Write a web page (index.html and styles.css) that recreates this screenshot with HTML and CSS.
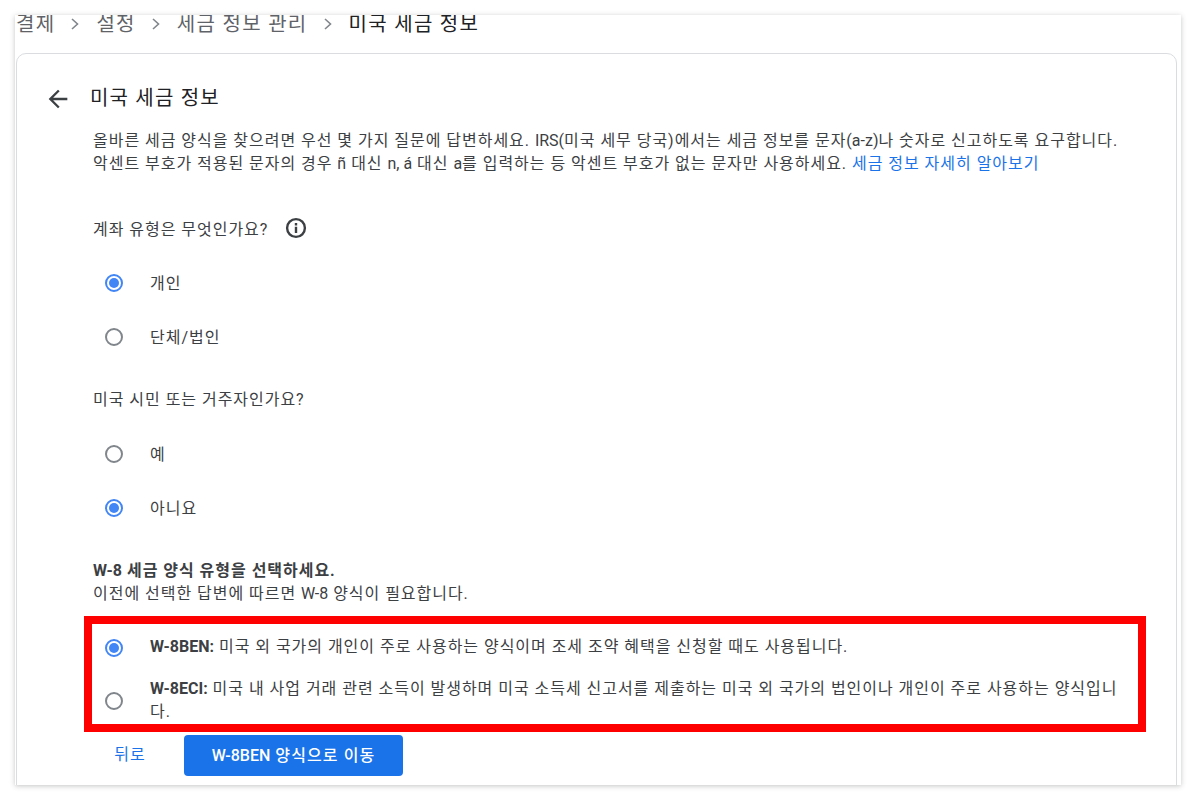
FILE: index.html
```html
<!DOCTYPE html>
<html lang="ko">
<head>
<meta charset="utf-8">
<title>미국 세금 정보</title>
<link rel="stylesheet" href="styles.css">
</head>
<body>
<div class="sheet">
  <nav class="crumbs">
    <span>결제</span><svg class="chev" viewBox="0 0 10 14"><path d="M2 2l5.5 5L2 12" fill="none" stroke="#80868b" stroke-width="1.6"/></svg>
    <span>설정</span><svg class="chev" viewBox="0 0 10 14"><path d="M2 2l5.5 5L2 12" fill="none" stroke="#80868b" stroke-width="1.6"/></svg>
    <span>세금 정보 관리</span><svg class="chev" viewBox="0 0 10 14"><path d="M2 2l5.5 5L2 12" fill="none" stroke="#80868b" stroke-width="1.6"/></svg>
    <span class="current">미국 세금 정보</span>
  </nav>
  <main class="card">
    <header class="head">
      <svg class="back" viewBox="0 0 24 24"><path d="M20 11H7.83l5.59-5.59L12 4l-8 8 8 8 1.41-1.41L7.83 13H20z" fill="#3c4043"/></svg>
      <h1>미국 세금 정보</h1>
    </header>
    <p class="intro">올바른 세금 양식을 찾으려면 우선 몇 가지 질문에 답변하세요. <span class="l">IRS(</span>미국 세무 당국)에서는 세금 정보를 문자<span class="l">(a-z)</span>나 숫자로 신고하도록 요구합니다.<br>악센트 부호가 적용된 문자의 경우 <span class="l">ñ</span> 대신 <span class="l">n, á</span> 대신 <span class="l">a</span>를 입력하는 등 악센트 부호가 없는 문자만 사용하세요. <a href="#">세금 정보 자세히 알아보기</a></p>

    <div class="question q1">계좌 유형은 무엇인가요?
      <svg class="info" viewBox="0 0 24 24"><circle cx="12" cy="12" r="8.9" fill="none" stroke="#3c4043" stroke-width="2.4"/><path d="M10.8 7h2.4v2.4h-2.4zm0 3.8h2.4V17h-2.4z" fill="#3c4043"/></svg>
    </div>
    <div class="opt"><span class="radio on"></span><span class="opt-text">개인</span></div>
    <div class="opt"><span class="radio"></span><span class="opt-text">단체/법인</span></div>

    <div class="question q2">미국 시민 또는 거주자인가요?</div>
    <div class="opt"><span class="radio"></span><span class="opt-text">예</span></div>
    <div class="opt"><span class="radio on"></span><span class="opt-text">아니요</span></div>

    <div class="w8"><strong><span class="l">W-8</span> 세금 양식 유형을 선택하세요.</strong><br>이전에 선택한 답변에 따르면 <span class="l">W-8</span> 양식이 필요합니다.</div>

    <div class="highlight">
      <div class="form-opt first"><span class="radio on"></span><span class="form-text"><b class="l">W-8BEN:</b> 미국 외 국가의 개인이 주로 사용하는 양식이며 조세 조약 혜택을 신청할 때도 사용됩니다.</span></div>
      <div class="form-opt second"><span class="radio"></span><span class="form-text"><b class="l">W-8ECI:</b> 미국 내 사업 거래 관련 소득이 발생하며 미국 소득세 신고서를 제출하는 미국 외 국가의 법인이나 개인이 주로 사용하는 양식입니다.</span></div>
    </div>

    <div class="actions">
      <a class="btn-back" href="#">뒤로</a>
      <a class="btn-next" href="#"><span class="l">W-8BEN</span> 양식으로 이동</a>
    </div>
  </main>
</div>
</body>
</html>
```
FILE: styles.css
```css
* { box-sizing: border-box; }
html, body { margin: 0; height: 800px; overflow: hidden; background: #fff; }
body { font-family: Roboto, "Noto Sans CJK KR", sans-serif; color: #3c4043; font-size: 16px; letter-spacing: 0.97px; padding: 15px; }
.l { letter-spacing: 0; }
.sheet { width: 1166px; height: 770px; overflow: hidden; background: #fff; box-shadow: 0 1px 5px rgba(60,64,67,.3); padding-left: 1px; }
.crumbs { display: flex; align-items: center; height: 38px; font-size: 20px; letter-spacing: 1.3px; color: #5f6368; line-height: 18px; }
.crumbs span { position: relative; top: -10px; }
.crumbs .current { color: #202124; }
.chev { width: 10px; height: 14px; margin: 0 16px 0 15px; position: relative; top: -10px; }
.card { width: 1161px; height: 760px; border: 1px solid #dadce0; border-radius: 10px; padding: 0 28px 0 31px; }
.head { display: flex; align-items: center; height: 84px; }
.back { width: 28px; height: 28px; margin-left: -4px; margin-right: 18px; margin-top: 5px; flex: none; }
h1 { font-size: 20px; font-weight: 400; letter-spacing: 1.2px; margin: 0; color: #202124; }
.intro { margin: -9px 0 0 45px; line-height: 23px; white-space: nowrap; }
.intro a { color: #1a73e8; text-decoration: none; }
.question { margin-left: 45px; display: flex; align-items: center; height: 24px; }
.q1 { margin-top: 41px; }
.q2 { margin-top: 22px; }
.info { width: 24px; height: 24px; margin-left: 16px; }
.opt { display: flex; align-items: center; height: 54px; margin-left: 57px; }
.opt-text { margin-bottom: 2px; }
.q1 + .opt { margin-top: 16px; }
.q2 + .opt { margin-top: 17px; }
.radio { flex: none; width: 18px; height: 18px; border: 2px solid #80868b; border-radius: 50%; margin-right: 27px; position: relative; }
.radio.on { border-color: #4285f4; }
.radio.on::after { content: ""; position: absolute; inset: 2px; background: #4285f4; border-radius: 50%; }
.w8 { margin: 24px 0 0 45px; line-height: 23px; }
.w8 strong { font-weight: 700; }
.highlight { width: 1062px; height: 116px; margin: 11px 0 0 36px; border: 8px solid #f00; }
.form-opt { display: flex; align-items: center; padding: 0 20px 0 13px; line-height: 23px; }
.form-opt.first { height: 46px; margin-bottom: 7px; }
.first .radio { margin-top: 2px; }
.first .form-text { margin-bottom: 2px; }
.second .radio { margin-top: 2px; }
.actions { display: flex; align-items: center; margin: 2px 0 0 36px; }
.btn-back { color: #1a73e8; text-decoration: none; width: 92px; margin-right: 8px; height: 42px; line-height: 42px; text-align: center; }
.btn-next { background: #1a73e8; color: #fff; font-weight: 500; letter-spacing: 1.1px; height: 41px; line-height: 41px; width: 219px; text-align: center; border-radius: 4px; text-decoration: none; }
```
